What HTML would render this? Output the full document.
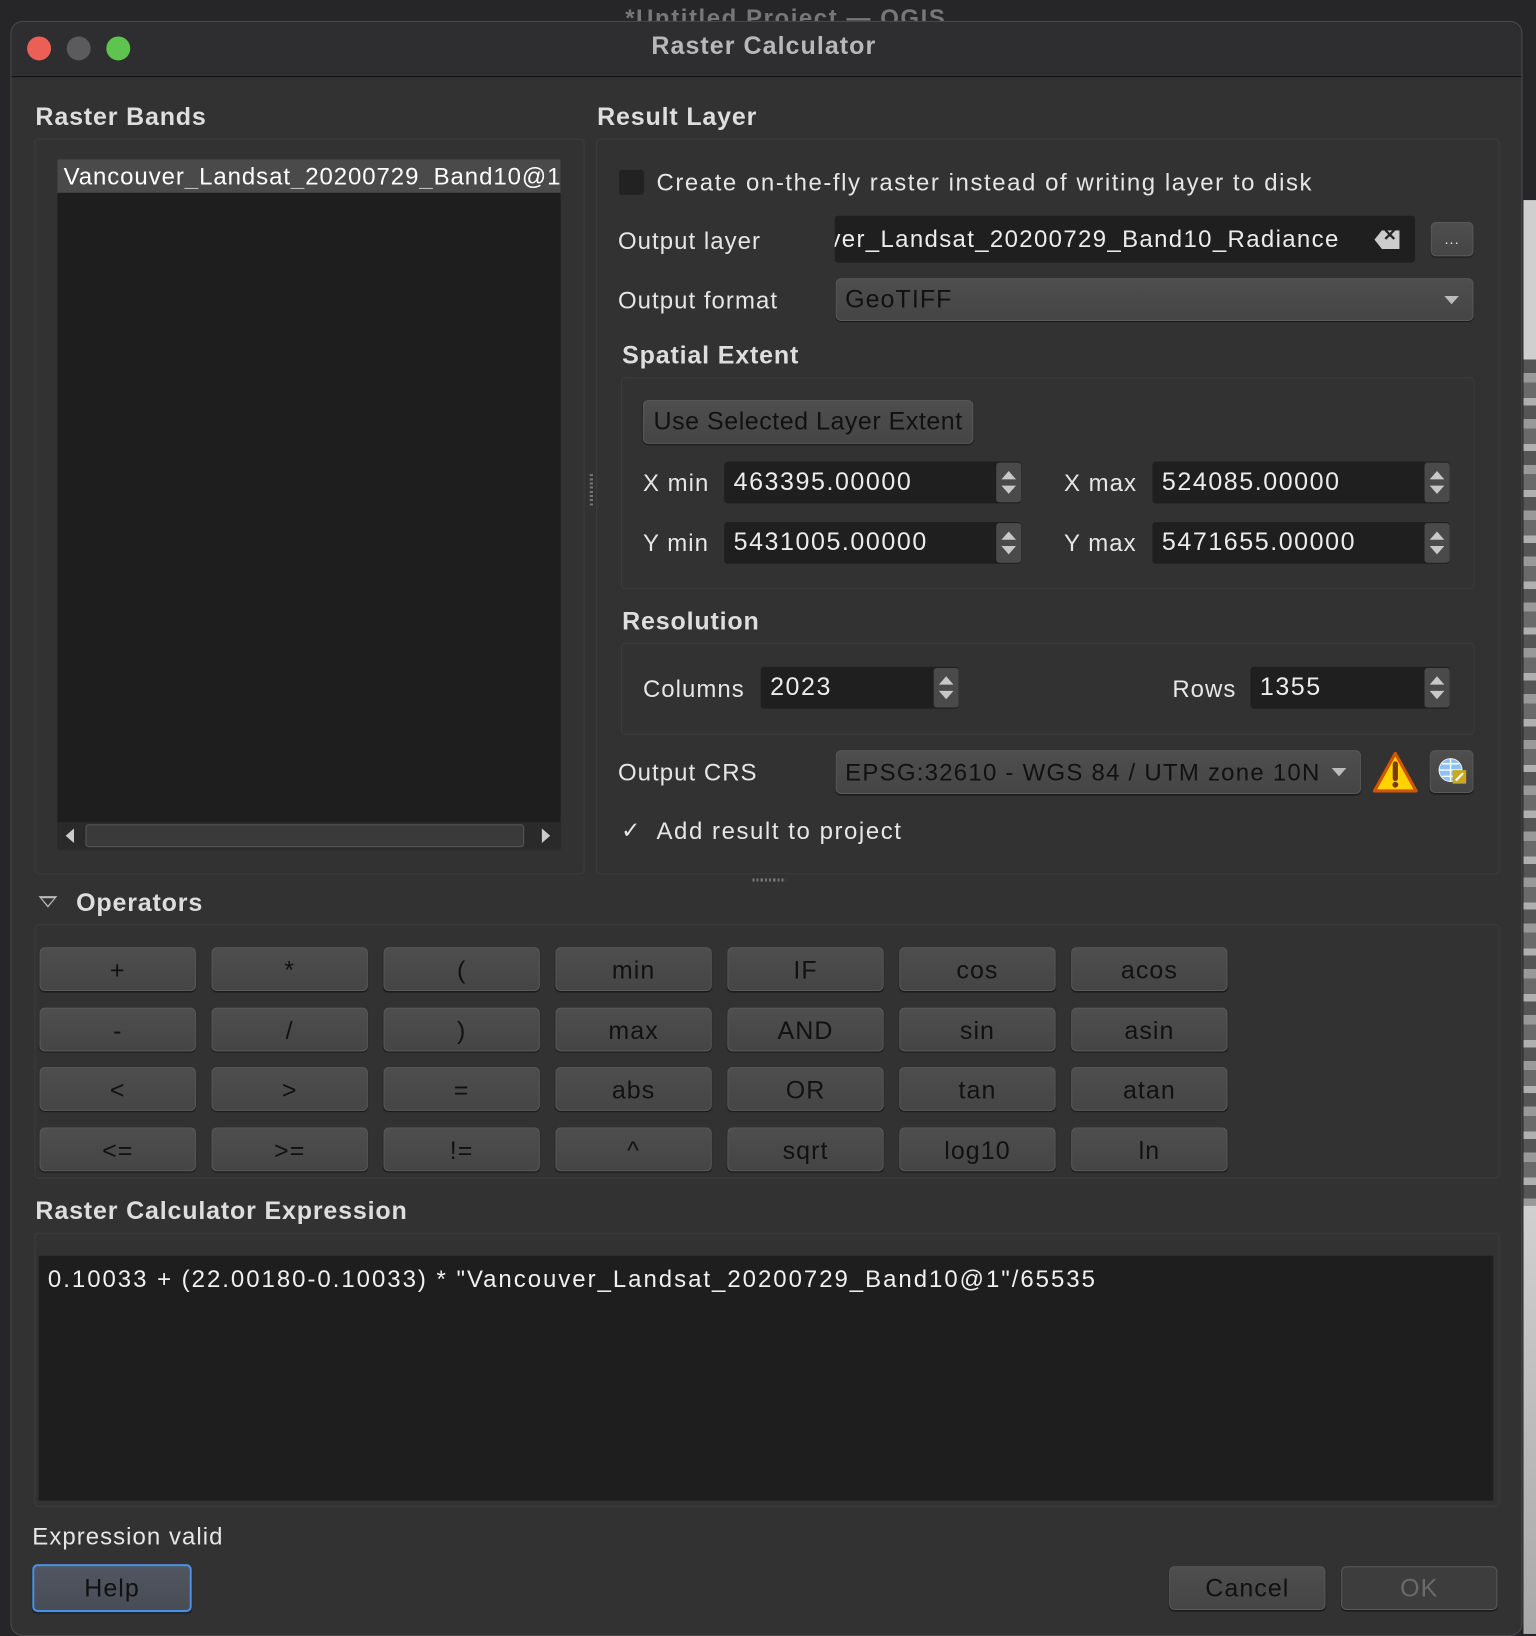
<!DOCTYPE html><html><head><meta charset="utf-8"><style>
*{box-sizing:border-box;margin:0;padding:0}
body{width:1536px;height:1634px;overflow:hidden;background:#262628;font-family:"Liberation Sans",Arial,sans-serif}
#w{position:absolute;left:0;top:0;width:1474px;height:1568px;transform:scale(1.04206);transform-origin:0 0}
.a{position:absolute}
.t{position:absolute;color:#e6e6e6;font-size:23px;white-space:nowrap;line-height:1;letter-spacing:1.5px}
.b{font-weight:bold;color:#dedede;font-size:24px;letter-spacing:0.8px}
.grp{position:absolute;border:1px solid #3c3c3c;border-radius:4px}
.btn{position:absolute;background:linear-gradient(#4e4e4e,#454545);border:1px solid #5a5a5a;border-radius:5px;color:#111;font-size:24px;text-align:center;box-shadow:0 1px 1px #1a1a1a;letter-spacing:1px}
.in{position:absolute;background:#1f1f1f;border-radius:3px;color:#ececec;font-size:24px;line-height:40px;padding-left:9px;overflow:hidden;white-space:nowrap;letter-spacing:1.5px}
.sp{position:absolute;right:0;top:1px;width:24px;bottom:1px;background:#4a4a4a;border-radius:3px}
.sp:before{content:"";position:absolute;left:5px;top:8px;border:7px solid transparent;border-bottom:8px solid #c8c8c8;border-top:0}
.sp:after{content:"";position:absolute;left:5px;bottom:8px;border:7px solid transparent;border-top:8px solid #c8c8c8;border-bottom:0}
</style></head><body><div id="w">
<div class="a" style="left:1462px;top:192px;width:12px;height:153px;background:#cfcfcf"></div>
<div class="a" style="left:1462px;top:345px;width:12px;height:812px;background:repeating-linear-gradient(#555 0 13px,#999 13px 22px,#6a6a6a 22px 37px,#b0b0b0 37px 44px)"></div>
<div class="a" style="left:1462px;top:1157px;width:12px;height:411px;background:linear-gradient(#d0d0d0,#a8a8a8)"></div>
<div class="t" style="left:600px;top:6px;color:#777;font-weight:bold">*Untitled Project — QGIS</div>
<div class="a" style="left:10px;top:20px;width:1451px;height:1550px;background:#323232;border:1px solid #4a4a4a;border-radius:12px;overflow:hidden">
 <div class="a" style="left:0;top:0;width:100%;height:53px;background:#2e2e30;border-bottom:1px solid #111"></div>
</div>
<div class="a" style="left:26px;top:35px;width:23px;height:23px;border-radius:50%;background:#ec5f57"></div>
<div class="a" style="left:64px;top:35px;width:23px;height:23px;border-radius:50%;background:#5b5b5e"></div>
<div class="a" style="left:102px;top:35px;width:23px;height:23px;border-radius:50%;background:#5fc44f"></div>
<div class="t b" style="left:0;width:1466px;text-align:center;top:33px;color:#b8b8b8;letter-spacing:1px">Raster Calculator</div>

<div class="t b" style="left:34px;top:101px">Raster Bands</div>
<div class="grp" style="left:33px;top:133px;width:528px;height:706px"></div>
<div class="a" style="left:55px;top:153px;width:483px;height:662px;background:#1e1e1e"></div>
<div class="a" style="left:55px;top:153px;width:483px;height:32px;background:#4a4a4a"></div>
<div class="t" style="left:61px;top:158px;color:#fff;letter-spacing:0.9px;width:476px;overflow:hidden">Vancouver_Landsat_20200729_Band10@1</div>
<div class="a" style="left:55px;top:789px;width:483px;height:26px;background:#2a2a2a"></div>
<div class="a" style="left:82px;top:791px;width:421px;height:22px;background:#3a3a3a;border:1px solid #555;border-radius:3px"></div>
<div class="a" style="left:63px;top:795px;border:7px solid transparent;border-right:8px solid #ccc;border-left:0"></div>
<div class="a" style="left:520px;top:795px;border:7px solid transparent;border-left:8px solid #ccc;border-right:0"></div>
<div class="a" style="left:566px;top:455px;width:3px;height:30px;background:repeating-linear-gradient(#777 0 2px,transparent 2px 4px)"></div>

<div class="t b" style="left:573px;top:101px">Result Layer</div>
<div class="grp" style="left:572px;top:133px;width:867px;height:706px"></div>
<div class="a" style="left:594px;top:163px;width:24px;height:24px;background:#222;border-radius:3px"></div>
<div class="t" style="left:630px;top:164px">Create on-the-fly raster instead of writing layer to disk</div>
<div class="t" style="left:593px;top:220px;letter-spacing:1px">Output layer</div>
<div class="in" style="left:801px;top:207px;width:557px;height:45px;line-height:45px;padding-left:0;font-size:23px;letter-spacing:1.3px"><span style="margin-left:-6px">ver_Landsat_20200729_Band10_Radiance</span></div>
<div class="a" style="left:1319px;top:221px;width:24px;height:18px;background:#ccc;clip-path:polygon(30% 0,100% 0,100% 100%,30% 100%,0 50%)"></div>
<div class="t" style="left:1327px;top:219px;color:#222;font-size:16px;font-weight:bold;letter-spacing:0">✕</div>
<div class="btn" style="left:1373px;top:213px;width:41px;height:33px;font-size:14px;color:#ddd;line-height:30px">...</div>
<div class="t" style="left:593px;top:277px;letter-spacing:1px">Output format</div>
<div class="btn" style="left:802px;top:267px;width:612px;height:41px;text-align:left;padding-left:8px;line-height:40px;color:#111">GeoTIFF</div>
<div class="a" style="left:1386px;top:284px;border:7px solid transparent;border-top:8px solid #bbb;border-bottom:0"></div>

<div class="t b" style="left:597px;top:330px">Spatial Extent</div>
<div class="grp" style="left:596px;top:362px;width:819px;height:203px"></div>
<div class="btn" style="left:617px;top:384px;width:317px;height:42px;line-height:40px;letter-spacing:0.5px">Use Selected Layer Extent</div>
<div class="t" style="left:617px;top:452px;letter-spacing:1px">X min</div>
<div class="in" style="left:695px;top:443px;width:285px;height:40px">463395.00000<div class="sp"></div></div>
<div class="t" style="left:1021px;top:452px;letter-spacing:1px">X max</div>
<div class="in" style="left:1106px;top:443px;width:285px;height:40px">524085.00000<div class="sp"></div></div>
<div class="t" style="left:617px;top:510px;letter-spacing:1px">Y min</div>
<div class="in" style="left:695px;top:501px;width:285px;height:40px">5431005.00000<div class="sp"></div></div>
<div class="t" style="left:1021px;top:510px;letter-spacing:1px">Y max</div>
<div class="in" style="left:1106px;top:501px;width:285px;height:40px">5471655.00000<div class="sp"></div></div>

<div class="t b" style="left:597px;top:585px">Resolution</div>
<div class="grp" style="left:596px;top:617px;width:819px;height:88px"></div>
<div class="t" style="left:617px;top:650px;letter-spacing:1px">Columns</div>
<div class="in" style="left:730px;top:640px;width:190px;height:40px">2023<div class="sp"></div></div>
<div class="t" style="left:1125px;top:650px;letter-spacing:1px">Rows</div>
<div class="in" style="left:1200px;top:640px;width:191px;height:40px">1355<div class="sp"></div></div>

<div class="t" style="left:593px;top:730px;letter-spacing:1px">Output CRS</div>
<div class="btn" style="left:802px;top:720px;width:504px;height:42px;text-align:left;padding-left:8px;line-height:41px;font-size:23px;letter-spacing:1.2px">EPSG:32610 - WGS 84 / UTM zone 10N</div>
<div class="a" style="left:1278px;top:737px;border:7px solid transparent;border-top:8px solid #bbb;border-bottom:0"></div>
<svg class="a" style="left:1317px;top:721px" width="44" height="40" viewBox="0 0 44 40"><path d="M22 2L42 38H2Z" fill="#ffd200" stroke="#d35400" stroke-width="3" stroke-linejoin="round"/><path d="M22 12v14" stroke="#7a3a00" stroke-width="5" stroke-linecap="round"/><circle cx="22" cy="32" r="2.8" fill="#7a3a00"/></svg>
<div class="btn" style="left:1372px;top:720px;width:42px;height:41px"></div>
<svg class="a" style="left:1378px;top:725px" width="32" height="30" viewBox="0 0 32 30"><circle cx="14" cy="14" r="11" fill="#8fc0f0" stroke="#eee" stroke-width="1"/><path d="M3 14h22M14 3v22M6 8h16M6 20h16" stroke="#fff" stroke-width="1.3"/><rect x="16" y="14" width="13" height="13" fill="#c9a820"/><path d="M19 24l7-7" stroke="#fff" stroke-width="2"/></svg>
<div class="t" style="left:596px;top:786px;font-size:22px">✓</div>
<div class="t" style="left:630px;top:786px">Add result to project</div>
<div class="a" style="left:722px;top:843px;width:32px;height:3px;background:repeating-linear-gradient(90deg,#777 0 2px,transparent 2px 4px)"></div>

<div class="a" style="left:37px;top:860px;border:9px solid transparent;border-top:11px solid #bbb;border-bottom:0"></div>
<div class="a" style="left:40px;top:862px;border:6px solid transparent;border-top:7px solid #323232;border-bottom:0"></div>
<div class="t b" style="left:73px;top:855px">Operators</div>
<div class="grp" style="left:33px;top:887px;width:1406px;height:244px"></div>
<div id="ops"></div>

<div class="t b" style="left:34px;top:1151px">Raster Calculator Expression</div>
<div class="grp" style="left:33px;top:1183px;width:1406px;height:263px"></div>
<div class="a" style="left:37px;top:1205px;width:1396px;height:235px;background:#1e1e1e"></div>
<div class="t" style="left:46px;top:1216px;color:#f0f0f0;letter-spacing:1.9px">0.10033 + (22.00180-0.10033) * "Vancouver_Landsat_20200729_Band10@1"/65535</div>
<div class="t" style="left:31px;top:1463px;letter-spacing:1px">Expression valid</div>
<div class="btn" style="left:31px;top:1501px;width:153px;height:46px;line-height:44px;border:2px solid #4a90e2;background:linear-gradient(#505662,#484c55)">Help</div>
<div class="btn" style="left:1122px;top:1503px;width:150px;height:42px;line-height:41px">Cancel</div>
<div class="btn" style="left:1287px;top:1503px;width:150px;height:42px;line-height:41px;color:#6a6a6a;background:#3d3d3d">OK</div>
<script>
var L=[["+","*","(","min","IF","cos","acos"],["-","/",")","max","AND","sin","asin"],["<",">","=","abs","OR","tan","atan"],["<=",">=","!=","^","sqrt","log10","ln"]],h="";
L.forEach(function(r,i){r.forEach(function(s,j){h+='<div class="btn" style="left:'+(38+165*j)+'px;top:'+(909+57.6*i)+'px;width:150px;height:42px;line-height:43px">'+s.replace(/</g,"&lt;").replace(/>/g,"&gt;")+'</div>'})});
document.getElementById("ops").outerHTML=h;
</script>
</div></body></html>
